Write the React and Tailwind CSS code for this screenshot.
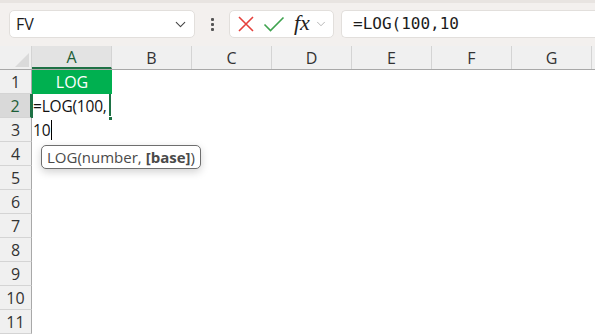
import { ChevronDown } from 'lucide-react';

const cols = ['A', 'B', 'C', 'D', 'E', 'F', 'G'];
const rows = [1, 2, 3, 4, 5, 6, 7, 8, 9, 10, 11];

function Toolbar() {
  return (
    <div className="h-[46px] bg-[#f3f0ee] border-t-[3px] border-[#e8e4e1] flex items-start pt-[7px] pl-[9px] gap-[7px]">
      <div className="w-[186px] h-[28px] bg-white rounded-[5px] border border-[#e2dfdc] flex items-center justify-between pl-[6px] pr-[5px]">
        <span className="text-[16px] text-[#1b1b1b]">FV</span>
        <ChevronDown size={17} strokeWidth={1.5} className="text-[#444]" />
      </div>
      <div className="w-[20px] h-[28px] flex flex-col items-center justify-center gap-[2px]">
        <span className="w-[3px] h-[3px] bg-[#555] rounded-[1px]" />
        <span className="w-[3px] h-[3px] bg-[#555] rounded-[1px]" />
        <span className="w-[3px] h-[3px] bg-[#555] rounded-[1px]" />
      </div>
      <div className="w-[105px] h-[28px] bg-white rounded-[5px] border border-[#e2dfdc] flex items-center pl-[6px]">
        <svg width="18" height="18" viewBox="0 0 18 18" className="ml-[1px]">
          <path d="M2 2 L16 16 M16 2 L2 16" stroke="#e5403c" strokeWidth="1.6" fill="none" />
        </svg>
        <svg width="22" height="18" viewBox="0 0 22 18" className="ml-[8px]">
          <path d="M1.5 9.5 L7.5 15.5 L20.5 2.5" stroke="#3fa34f" strokeWidth="1.6" fill="none" />
        </svg>
        <span className="ml-[9px] font-['Liberation_Serif',serif] italic text-[22px] leading-none text-[#222] -mt-[3px]">fx</span>
        <ChevronDown size={14} strokeWidth={1.2} className="text-[#999] ml-[4px]" />
      </div>
      <div className="flex-1 h-[28px] bg-white rounded-l-[5px] border border-r-0 border-[#e2dfdc] flex items-center pl-[11px]">
        <span className="font-['DejaVu_Sans_Mono',monospace] text-[16px] text-[#1b1b1b]">=LOG(100,10</span>
      </div>
    </div>
  );
}

function HeaderRow() {
  return (
    <div className="flex h-[24px] bg-[#f0f0f0] border-b border-[#a8a8a8]">
      <div className="w-[32px] border-r border-[#d4d4d4] relative">
        <div className="absolute right-[2px] bottom-[2px] w-0 h-0 border-l-[14px] border-l-transparent border-b-[14px] border-b-[#dadada]" />
      </div>
      {cols.map((c) => (
        <div
          key={c}
          className={
            c === 'A'
              ? 'w-[80px] border-r border-[#d4d4d4] bg-[#e3e3e3] flex items-center justify-center text-[16px] text-[#1d5e38] border-b-2 border-b-[#1e7145]'
              : 'w-[80px] border-r border-[#d4d4d4] flex items-center justify-center text-[16px] text-[#333]'
          }
        >
          {c}
        </div>
      ))}
    </div>
  );
}

export default function App() {
  return (
    <div className="w-[595px] h-[335px] overflow-hidden bg-white font-['Open_Sans','Noto_Sans',sans-serif] relative">
      <Toolbar />
      <HeaderRow />
      <div className="flex flex-col">
        {rows.map((r) => (
          <div key={r} className="flex h-[24px]">
            <div
              className={
                r === 2
                  ? 'w-[32px] bg-[#d9d9d9] border-b border-[#d4d4d4] border-r-2 border-r-[#1e7145] flex items-center justify-center text-[16px] text-[#1d5e38]'
                  : 'w-[32px] bg-[#f0f0f0] border-b border-[#d4d4d4] border-r border-r-[#a8a8a8] flex items-center justify-center text-[16px] text-[#333]'
              }
            >
              {r}
            </div>
            {r === 1 && (
              <div className="w-[80px] bg-[#00b050] flex items-center justify-center text-[16px] text-white">
                LOG
              </div>
            )}
            {r === 2 && (
              <div className="w-[80px] -ml-[1px] border-l-2 border-r-2 border-[#1e7145] relative">
                <div className="absolute z-10 left-0 top-0 text-[15.5px] tracking-[-0.2px] leading-[24px] text-[#111] whitespace-nowrap">
                  <div>=LOG(100,</div>
                  <div className="flex items-center">
                    10<span className="w-[1px] h-[20px] bg-black ml-[1px]" />
                  </div>
                </div>
                <div className="absolute -right-[4px] -bottom-[3px] w-[5px] h-[5px] bg-[#1e7145] border border-white" />
              </div>
            )}
          </div>
        ))}
      </div>
      <div className="absolute left-[41px] top-[145px] h-[24px] px-[5px] flex items-center bg-white border border-[#6e6e6e] rounded-[5px] shadow-[0_3px_8px_rgba(0,0,0,0.18)] text-[15px] text-[#4a4a4a]">
        LOG(number, <span className="font-bold ml-[4px]">[base]</span>)
      </div>
    </div>
  );
}
